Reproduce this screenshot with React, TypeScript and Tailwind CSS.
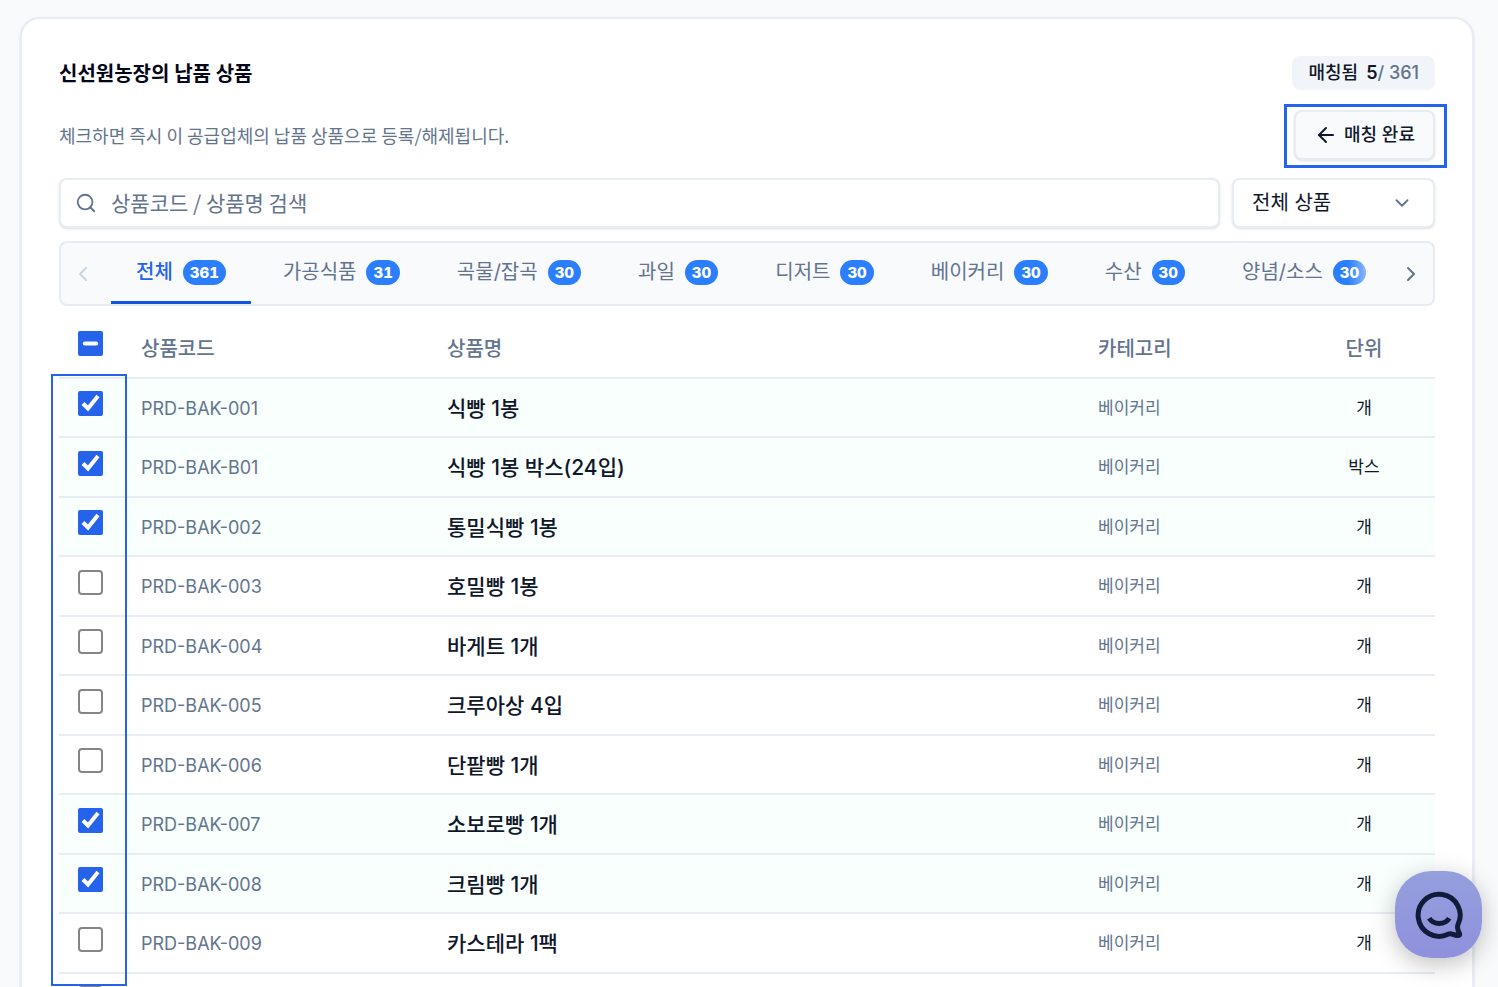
import { useEffect, useRef, useState } from 'react';
import { ArrowLeft, ChevronDown, ChevronLeft, ChevronRight, Search } from 'lucide-react';

interface Product {
  code: string;
  name: string;
  category: string;
  unit: string;
  matched: boolean;
}

const tabs = [
  { label: '전체', count: 361 },
  { label: '가공식품', count: 31 },
  { label: '곡물/잡곡', count: 30 },
  { label: '과일', count: 30 },
  { label: '디저트', count: 30 },
  { label: '베이커리', count: 30 },
  { label: '수산', count: 30 },
  { label: '양념/소스', count: 30 },
];

const initialProducts: Product[] = [
  { code: 'PRD-BAK-001', name: '식빵 1봉', category: '베이커리', unit: '개', matched: true },
  { code: 'PRD-BAK-B01', name: '식빵 1봉 박스(24입)', category: '베이커리', unit: '박스', matched: true },
  { code: 'PRD-BAK-002', name: '통밀식빵 1봉', category: '베이커리', unit: '개', matched: true },
  { code: 'PRD-BAK-003', name: '호밀빵 1봉', category: '베이커리', unit: '개', matched: false },
  { code: 'PRD-BAK-004', name: '바게트 1개', category: '베이커리', unit: '개', matched: false },
  { code: 'PRD-BAK-005', name: '크루아상 4입', category: '베이커리', unit: '개', matched: false },
  { code: 'PRD-BAK-006', name: '단팥빵 1개', category: '베이커리', unit: '개', matched: false },
  { code: 'PRD-BAK-007', name: '소보로빵 1개', category: '베이커리', unit: '개', matched: true },
  { code: 'PRD-BAK-008', name: '크림빵 1개', category: '베이커리', unit: '개', matched: true },
  { code: 'PRD-BAK-009', name: '카스테라 1팩', category: '베이커리', unit: '개', matched: false },
  { code: '', name: '', category: '', unit: '', matched: false },
];

function CategoryTabs() {
  const [active, setActive] = useState('전체');

  return (
    <div className="mt-[13px] flex h-[65px] rounded-lg border-2 border-slate-200/80 bg-slate-50">
      <button type="button" aria-label="이전 카테고리" className="flex w-[50px] shrink-0 items-center justify-center pr-1.5 text-slate-300">
        <ChevronLeft className="size-6" />
      </button>
      <div className="relative min-w-0 flex-1">
        <div role="tablist" className="flex h-full gap-[7px] overflow-hidden">
          {tabs.map((tab) => (
            <button
              key={tab.label}
              type="button"
              role="tab"
              aria-selected={tab.label === active}
              onClick={() => setActive(tab.label)}
              className={`flex shrink-0 items-center gap-[10px] border-b-3 px-[25px] text-xl ${
                tab.label === active
                  ? 'border-[#1554e0] font-medium text-[#2563eb]'
                  : 'border-transparent text-slate-500'
              }`}
            >
              {tab.label}
              <span className="flex h-[25px] items-center rounded-full bg-[#2b7fff] px-[7px] text-[15px] font-extrabold text-white tabular-nums">
                {tab.count}
              </span>
            </button>
          ))}
        </div>
        <div className="pointer-events-none absolute inset-y-0 right-0 w-10 bg-linear-to-l from-slate-50 to-transparent" />
      </div>
      <button type="button" aria-label="다음 카테고리" className="flex w-[45px] shrink-0 items-center justify-center text-slate-500">
        <ChevronRight className="size-6" />
      </button>
    </div>
  );
}

function ProductTable() {
  const [products, setProducts] = useState(initialProducts);
  const selectAll = useRef<HTMLInputElement>(null);
  const matched = products.filter((p) => p.matched).length;

  useEffect(() => {
    if (selectAll.current) {
      selectAll.current.indeterminate = matched > 0 && matched < products.length;
    }
  }, [matched, products.length]);

  const toggle = (index: number) =>
    setProducts(products.map((p, i) => (i === index ? { ...p, matched: !p.matched } : p)));

  const toggleAll = (checked: boolean) => setProducts(products.map((p) => ({ ...p, matched: checked })));

  return (
    <div className="relative mt-3">
      <table className="w-full table-fixed border-separate border-spacing-0 text-left">
        <colgroup>
          <col className="w-[66px]" />
          <col className="w-[306px]" />
          <col />
          <col className="w-[211px]" />
          <col className="w-[142px]" />
        </colgroup>
        <thead>
          <tr className="h-[61px] text-xl text-slate-500 [&>th]:border-b-2 [&>th]:border-slate-200/80 [&>th]:font-medium">
            <th className="pb-2 pl-[19px]">
              <input
                ref={selectAll}
                type="checkbox"
                aria-label="전체 선택"
                checked={matched === products.length}
                onChange={(e) => toggleAll(e.target.checked)}
                className="block size-[25px] accent-[#2563eb]"
              />
            </th>
            <th className="px-4 pt-[3px]">상품코드</th>
            <th className="px-4 pt-[3px]">상품명</th>
            <th className="px-4 pt-[3px]">카테고리</th>
            <th className="px-4 pt-[3px] text-center">단위</th>
          </tr>
        </thead>
        <tbody>
          {products.map((product, i) => (
            <tr
              key={i}
              className={`odd:h-[59px] even:h-[60px] [&>td]:border-b-2 [&>td]:border-slate-200/80 ${
                product.matched ? 'bg-[#f8fffc]' : 'bg-white'
              }`}
            >
              <td className="pb-2 pl-[19px]">
                <input
                  type="checkbox"
                  aria-label={product.name}
                  checked={product.matched}
                  onChange={() => toggle(i)}
                  className={`block size-[25px] ${
                    product.matched
                      ? 'accent-[#2563eb]'
                      : 'appearance-none rounded border-2 border-[#858585] bg-white'
                  }`}
                />
              </td>
              <td className="px-4 pt-0.5 text-lg text-slate-500">{product.code}</td>
              <td className="px-4 pt-0.5 text-[21px] font-medium text-slate-900">{product.name}</td>
              <td className="px-4 pt-0.5 text-[17px] text-slate-500">{product.category}</td>
              <td className="px-4 pt-0.5 text-center text-[17px] text-slate-900">{product.unit}</td>
            </tr>
          ))}
        </tbody>
      </table>
      {/* Highlight round the row checkboxes */}
      <div className="pointer-events-none absolute top-14 -left-2 h-[612px] w-[76px] border-2 border-[#2563eb]" />
    </div>
  );
}

function ChatButton() {
  return (
    <button
      type="button"
      aria-label="채팅 문의"
      className="fixed right-4 bottom-[29px] flex size-[87px] items-center justify-center rounded-[36px] bg-linear-to-b from-[#949fdd] to-[#9090dc] shadow-[0_6px_24px_rgba(0,0,0,0.25)]"
    >
      <svg className="size-[50px]" viewBox="0 0 50 50" fill="none" stroke="#111c3b" strokeWidth="5" strokeLinejoin="round">
        <path d="M44 34.500A21 21 0 1 0 34 44.300C36 43.500 37.500 43.800 39 44.400C41 45.200 43 45.600 45.200 45.300C45.800 45 45.900 44 45 42.500C43.600 40 43 37.500 44 34.500Z" />
        <path d="M15.200 28.200C19.500 35.200 30.900 35.200 35.200 28.200" />
      </svg>
    </button>
  );
}

export default function App() {
  return (
    <div className="h-screen overflow-hidden bg-slate-50 pt-[17px] pr-6 pl-5 font-[Inter,'Noto_Sans_CJK_KR',sans-serif]">
      <main className="rounded-[20px] border-2 border-slate-200/80 bg-white px-[37px] py-[37px] shadow-sm">
        <header>
          <div className="flex h-[34px] items-center justify-between">
            <h1 className="pt-0.5 text-xl font-bold text-slate-950">신선원농장의 납품 상품</h1>
            <p className="flex h-[34px] items-center rounded-lg bg-slate-100 px-4 text-lg font-medium text-slate-900">
              매칭됨 <span className="ml-2 font-semibold">5</span>
              <span className="whitespace-pre text-slate-500">/ 361</span>
            </p>
          </div>
          <div className="mt-5 flex items-center justify-between">
            <p className="font-['Noto_Sans_CJK_KR',sans-serif] text-lg text-slate-500">
              체크하면 즉시 이 공급업체의 납품 상품으로 등록/해제됩니다.
            </p>
            <div className="relative">
              <button
                type="button"
                className="flex h-[50px] items-center gap-1.5 rounded-lg border-2 border-slate-200/80 bg-slate-50 px-[18px] text-lg font-medium text-slate-900 shadow-sm"
              >
                <ArrowLeft className="size-6" />
                매칭 완료
              </button>
              <div className="pointer-events-none absolute -top-1.5 -right-3 -bottom-2 -left-[10px] border-3 border-[#2563eb]" />
            </div>
          </div>
        </header>

        <div className="mt-[18px] flex gap-3">
          <label className="flex h-[50px] flex-1 items-center rounded-lg border-2 border-slate-200/80 bg-white px-[14px] shadow-sm">
            <Search className="size-[22px] shrink-0 text-slate-500" />
            <input
              type="text"
              aria-label="상품 검색"
              placeholder="상품코드 / 상품명 검색"
              className="ml-[14px] w-full font-['Noto_Sans_CJK_KR',sans-serif] text-[21px] outline-none placeholder:text-slate-500"
            />
          </label>
          <div className="relative w-[203px]">
            <select
              aria-label="상품 필터"
              className="h-[50px] w-full appearance-none rounded-lg border-2 border-slate-200/80 bg-white px-[18px] text-xl text-slate-900 shadow-sm"
            >
              <option>전체 상품</option>
            </select>
            <ChevronDown className="pointer-events-none absolute top-[14px] right-[22px] size-[22px] text-slate-500" />
          </div>
        </div>

        <CategoryTabs />
        <ProductTable />
      </main>
      <ChatButton />
    </div>
  );
}
